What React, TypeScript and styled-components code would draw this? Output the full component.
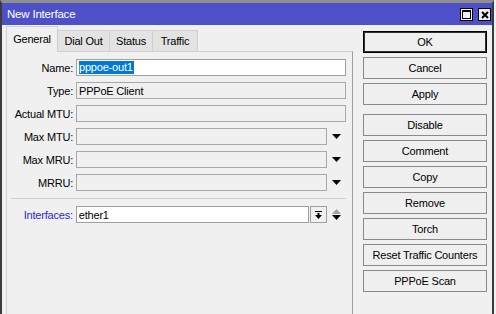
import React from "react";
import styled, { createGlobalStyle } from "styled-components";

const GlobalStyle = createGlobalStyle`
    html, body {
        margin: 0;
        padding: 0;
        background: #f0f0f0;
        overflow: hidden;
    }
    body {
        font-family: "Liberation Sans", Arial, sans-serif;
        font-size: 11px;
        letter-spacing: -0.2px;
        color: #000;
    }
`;

const tabs = [
    { label: "General", width: 52 },
    { label: "Dial Out", width: 52 },
    { label: "Status", width: 43 },
    { label: "Traffic", width: 45 },
];

const topButtons = ["OK", "Cancel", "Apply"];
const moreButtons = [
    "Disable",
    "Comment",
    "Copy",
    "Remove",
    "Torch",
    "Reset Traffic Counters",
    "PPPoE Scan",
];

const DownArrow = () => (
    <svg width="9" height="5" viewBox="0 0 9 5">
        <polygon points="0,0 9,0 4.5,5" fill="#000" />
    </svg>
);

function App() {
    return (
        <>
            <GlobalStyle />
            <Window>
                <TitleBar>
                    <Title>New Interface</Title>
                    <TitleButtons>
                        <TitleButton>
                            <svg width="9" height="9" viewBox="0 0 9 9">
                                <rect x="0.5" y="0.5" width="8" height="8" fill="none" stroke="#000" />
                                <rect x="0" y="0" width="9" height="2" fill="#000" />
                            </svg>
                        </TitleButton>
                        <TitleButton>
                            <svg width="8" height="8" viewBox="0 0 8 8">
                                <path d="M1 1 L7 7 M7 1 L1 7" stroke="#000" strokeWidth="2" />
                            </svg>
                        </TitleButton>
                    </TitleButtons>
                </TitleBar>
                <Body>
                    <TabArea>
                        <TabStrip>
                            {tabs.map((tab, i) => (
                                <Tab key={tab.label} $active={i === 0} $width={tab.width}>
                                    {tab.label}
                                </Tab>
                            ))}
                        </TabStrip>
                        <TabPanel>
                            <FieldRow>
                                <Label>Name:</Label>
                                <Input $editable $width={270}>
                                    <Selected>pppoe-out1</Selected>
                                </Input>
                            </FieldRow>
                            <FieldRow>
                                <Label>Type:</Label>
                                <Input $width={270}>PPPoE Client</Input>
                            </FieldRow>
                            <FieldRow>
                                <Label>Actual MTU:</Label>
                                <Input $width={270} />
                            </FieldRow>
                            {["Max MTU:", "Max MRU:", "MRRU:"].map((label) => (
                                <FieldRow key={label}>
                                    <Label>{label}</Label>
                                    <Input $width={251} />
                                    <ArrowSlot>
                                        <DownArrow />
                                    </ArrowSlot>
                                </FieldRow>
                            ))}
                            <Separator />
                            <FieldRow>
                                <Label $link>Interfaces:</Label>
                                <Input $editable $width={234}>ether1</Input>
                                <PickButton>
                                    <svg width="7" height="8" viewBox="0 0 7 8">
                                        <rect x="0" y="0" width="7" height="1" fill="#000" />
                                        <rect x="2.5" y="2" width="2" height="2" fill="#000" />
                                        <polygon points="0,4 7,4 3.5,8" fill="#000" />
                                    </svg>
                                </PickButton>
                                <ArrowSlot>
                                    <svg width="9" height="11" viewBox="0 0 9 11">
                                        <polygon points="4.5,0 9,5 0,5" fill="#a0a0a0" />
                                        <polygon points="0,6 9,6 4.5,11" fill="#000" />
                                    </svg>
                                </ArrowSlot>
                            </FieldRow>
                        </TabPanel>
                    </TabArea>
                    <ButtonColumn>
                        <ButtonGroup>
                            {topButtons.map((b) => (
                                <DialogButton key={b} $default={b === "OK"}>
                                    {b}
                                </DialogButton>
                            ))}
                        </ButtonGroup>
                        <ButtonGroup>
                            {moreButtons.map((b) => (
                                <DialogButton key={b}>{b}</DialogButton>
                            ))}
                        </ButtonGroup>
                    </ButtonColumn>
                </Body>
            </Window>
        </>
    );
}

const Window = styled.div`
    width: 490px;
    height: 311px;
    border-top: 3px solid #8f8f8f;
    border-left: 2px solid #3c3c3c;
    border-right: 2px solid #3c3c3c;
    background: #f0f0f0;
    display: flex;
    flex-direction: column;
`;

const TitleBar = styled.div`
    height: 22px;
    background: #4e50c9;
    display: flex;
    align-items: center;
    justify-content: space-between;
    padding: 0 1px 0 5px;
`;

const Title = styled.span`
    color: #fff;
    font-size: 11.5px;
`;

const TitleButtons = styled.div`
    display: flex;
    gap: 5px;
    margin-top: 1px;
`;

const TitleButton = styled.div`
    width: 11px;
    height: 11px;
    border: 1px solid #000;
    background: #f0f0f0;
    display: flex;
    align-items: center;
    justify-content: center;
`;

const Body = styled.div`
    flex: 1;
    display: flex;
    padding: 0 5px 0 4px;
    min-height: 0;
`;

const TabArea = styled.div`
    width: 347px;
    padding-top: 2px;
    display: flex;
    flex-direction: column;
`;

const TabStrip = styled.div`
    height: 25px;
    display: flex;
    align-items: flex-end;
    margin-bottom: -1px;
    position: relative;
    z-index: 1;
`;

const Tab = styled.div<{ $active?: boolean; $width: number }>`
    width: ${(p) => p.$width}px;
    height: ${(p) => (p.$active ? 26 : 22)}px;
    box-sizing: border-box;
    display: flex;
    align-items: center;
    justify-content: center;
    padding-bottom: ${(p) => (p.$active ? 2 : 0)}px;
    background: ${(p) => (p.$active ? "#f0f0f0" : "#e3e3e3")};
    border: 1px solid #d0d0d0;
    border-bottom: ${(p) => (p.$active ? "none" : "1px solid #d0d0d0")};
    border-left-width: ${(p) => (p.$active ? 1 : 0)}px;
`;

const TabPanel = styled.div`
    flex: 1;
    border: 1px solid #d0d0d0;
    border-right-color: #9e9e9e;
    border-bottom: none;
    padding: 7px 6px 0 0;
    display: flex;
    flex-direction: column;
    gap: 6px;
`;

const FieldRow = styled.div`
    display: flex;
    align-items: center;
    height: 17px;
`;

const Label = styled.span<{ $link?: boolean }>`
    width: 66px;
    margin-right: 3px;
    text-align: right;
    color: ${(p) => (p.$link ? "#2a2ad8" : "#000")};
    white-space: nowrap;
`;

const Input = styled.div<{ $editable?: boolean; $width: number }>`
    width: ${(p) => p.$width}px;
    height: 17px;
    box-sizing: border-box;
    border: 1px solid ${(p) => (p.$editable ? "#a0a0a0" : "#a8a8a8")};
    background: ${(p) => (p.$editable ? "#fff" : "#f0f0f0")};
    padding-left: 2px;
    display: flex;
    align-items: center;
    white-space: nowrap;
`;

const Selected = styled.span`
    background: #0078d7;
    color: #fff;
    padding: 0 1px 0 0;
    line-height: 13px;
`;

const ArrowSlot = styled.div`
    width: 19px;
    display: flex;
    align-items: center;
    justify-content: center;
`;

const PickButton = styled.div`
    width: 17px;
    height: 17px;
    box-sizing: border-box;
    margin-left: 1px;
    border: 1px solid #a0a0a0;
    background: #f0f0f0;
    display: flex;
    align-items: center;
    justify-content: center;
`;

const Separator = styled.div`
    margin: 1px 0 1px 4px;
    border-top: 1px solid #d0d0d0;
`;

const ButtonColumn = styled.div`
    width: 124px;
    margin-left: 10px;
    padding-top: 6px;
    display: flex;
    flex-direction: column;
    gap: 9px;
`;

const ButtonGroup = styled.div`
    display: flex;
    flex-direction: column;
    gap: 4px;
`;

const DialogButton = styled.div<{ $default?: boolean }>`
    height: 22px;
    box-sizing: border-box;
    display: flex;
    align-items: center;
    justify-content: center;
    background: #efefef;
    border: 1px solid ${(p) => (p.$default ? "#000" : "#8a8a8a")};
    box-shadow: ${(p) => (p.$default ? "inset 0 0 0 1px #303030" : "none")};
`;

export default App;
